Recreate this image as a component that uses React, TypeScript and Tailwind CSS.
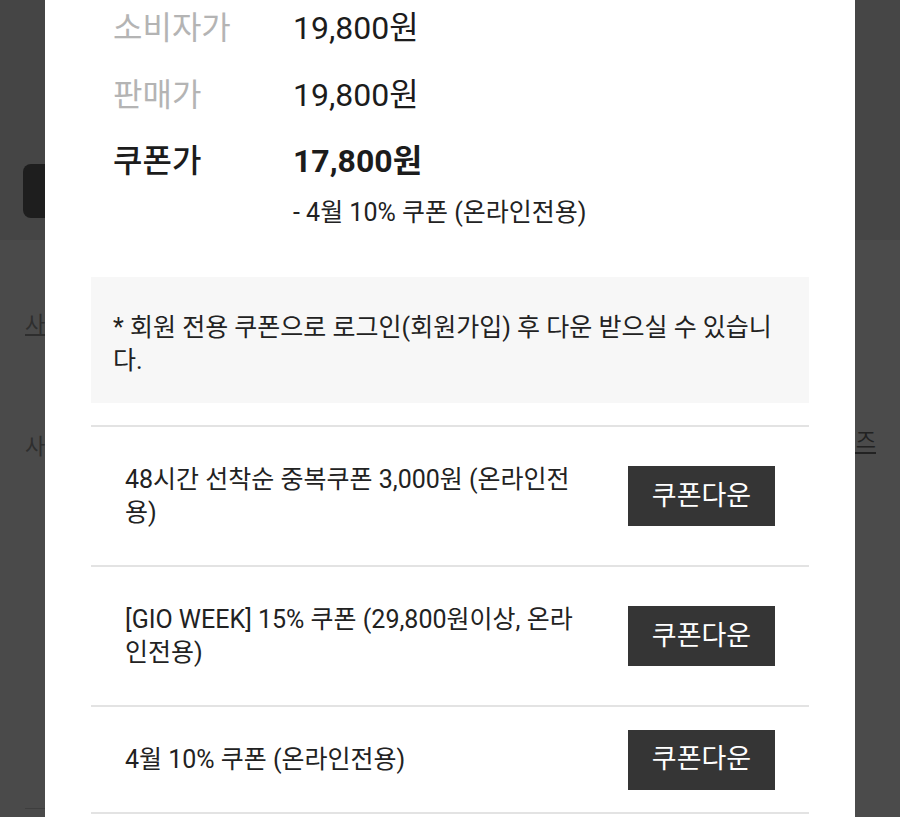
import React from 'react';

const coupons = [
    '48시간 선착순 중복쿠폰 3,000원 (온라인전용)',
    '[GIO WEEK] 15% 쿠폰 (29,800원이상, 온라인전용)',
    '4월 10% 쿠폰 (온라인전용)',
];

const PriceRow: React.FC<{ label: string; value: string; strong?: boolean }> = ({ label, value, strong }) => (
    <div className="flex items-center h-[40px] text-[32px] leading-[40px]">
        <span className={`w-[180px] ${strong ? 'text-[#1c1c1c] font-medium' : 'text-[#b4b4b4]'}`}>{label}</span>
        <span className={`text-[#1c1c1c] ${strong ? 'font-bold' : ''}`}>{value}</span>
    </div>
);

export default function App() {
    return (
        <div className="flex w-[900px] h-[817px] overflow-hidden font-['Roboto','Noto_Sans_CJK_KR',sans-serif]">
            {/* dimmed page behind, left side */}
            <div className="w-[45px] shrink-0 flex flex-col overflow-hidden">
                <div className="h-[240px] bg-[#454545] pt-[164px] pl-[23px]">
                    <div className="w-[60px] h-[54px] rounded-lg bg-[#1e1e1e]" />
                </div>
                <div className="flex-1 bg-[#4a4a4a] pl-[25px] text-[22px] leading-[30px] text-[#2e2e2e] whitespace-nowrap">
                    <div className="pt-[70px] underline">사이즈</div>
                    <div className="pt-[92px]">사용</div>
                    <div className="mt-[346px] border-t border-[#3e3e3e]" />
                </div>
            </div>

            {/* modal */}
            <div className="w-[810px] shrink-0 bg-white px-[46px]">
                <div className="pt-[8px] pl-[22px] flex flex-col gap-[26.5px]">
                    <PriceRow label="소비자가" value="19,800원" />
                    <PriceRow label="판매가" value="19,800원" />
                    <PriceRow label="쿠폰가" value="17,800원" strong />
                </div>
                <div className="pl-[202px] mt-[15px] text-[25px] leading-[33px] text-[#222]">- 4월 10% 쿠폰 (온라인전용)</div>

                <div className="mt-[48px] bg-[#f7f7f7] px-[22px] pt-[34px] pb-[26px] text-[25px] leading-[33px] text-[#222]">
                    * 회원 전용 쿠폰으로 로그인(회원가입) 후 다운 받으실 수 있습니다.
                </div>

                <div className="mt-[22px]">
                    {coupons.map((c) => (
                        <div key={c} className="flex items-center border-t-2 border-[#e3e3e3] pl-[34px] pr-[34px] py-[21px]">
                            <div className="w-[460px] py-[15px] text-[25px] leading-[33px] text-[#222]">{c}</div>
                            <button className="ml-auto w-[147px] h-[60px] bg-[#353535] text-white text-[27px]">쿠폰다운</button>
                        </div>
                    ))}
                    <div className="border-t-2 border-[#e3e3e3]" />
                </div>
            </div>

            {/* dimmed page behind, right side */}
            <div className="w-[45px] shrink-0 flex flex-col overflow-hidden">
                <div className="h-[240px] bg-[#464646]" />
                <div className="flex-1 bg-[#4b4b4b] flex justify-end pr-[24px] pt-[186px] text-[22px] leading-[30px] text-[#222] whitespace-nowrap">
                    <span className="underline underline-offset-4 h-[30px]">사이즈</span>
                </div>
            </div>
        </div>
    );
}
